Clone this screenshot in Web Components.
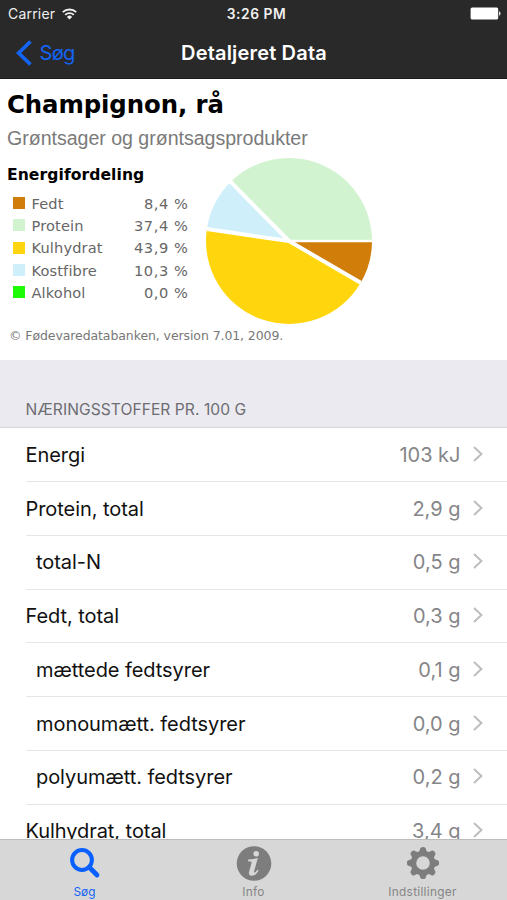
<!DOCTYPE html>
<html lang="da">
<head>
<meta charset="utf-8">
<title>Detaljeret Data</title>
<style>
html,body{margin:0;height:100%;overflow:hidden;background:#fff}
</style>
</head>
<body>
<food-app></food-app>
<script>
const define = (name, html, after) => {
  const t = document.createElement('template');
  t.innerHTML = html;
  customElements.define(name, class extends HTMLElement {
    connectedCallback() {
      if (this.shadowRoot) return;
      const r = this.attachShadow({mode: 'open'});
      r.append(t.content.cloneNode(true));
      if (after) after(this, r);
    }
  });
};

define('status-bar', `
<style>
:host{display:grid;grid-template-columns:1fr auto 1fr;align-items:center;height:27px;padding:0 6px 0 8px;box-sizing:border-box;color:#f0f0f0;font-size:14px}
.left{display:flex;align-items:center;gap:7px}
.left span{letter-spacing:.2px}
.time{font-weight:600;font-size:13.8px;letter-spacing:.55px;padding-left:4px}
.battery{justify-self:end}
svg{display:block}
</style>
<div class="left"><span>Carrier</span>
<svg width="15" height="12" viewBox="0 0 15 12"><g fill="none" stroke="#f0f0f0" stroke-width="1.9"><path d="M.8 4.2a9.5 9.5 0 0 1 13.4 0"/><path d="M3.2 6.9a6.1 6.1 0 0 1 8.6 0"/></g><path d="M7.5 11.6 4.9 8.9a3.7 3.7 0 0 1 5.2 0z" fill="#f0f0f0"/></svg></div>
<span class="time">3:26 PM</span>
<svg class="battery" width="31" height="13" viewBox="0 0 31 13"><rect x=".6" y=".5" width="27.6" height="12" rx="1.6" fill="#fff"/><path d="M29 4.3q1.6.5 1.6 2.2T29 8.7z" fill="#ddd"/></svg>`);

define('nav-bar', `
<style>
:host{display:grid;grid-template-columns:1fr auto 1fr;align-items:center;height:52px;padding:0 16px;box-sizing:border-box;border-bottom:1px solid #1c1c1c}
.back{display:flex;align-items:center;gap:6.5px;color:#1464f4;font-size:20.2px;letter-spacing:-.8px}
h1{margin:0;font-size:20px;font-weight:600;letter-spacing:.17px;color:#fff;padding-left:1px}
svg{display:block}
</style>
<div class="back"><svg width="17" height="26" viewBox="0 0 17 26"><path d="M14.5 1.5 2.6 13l11.9 11.5" fill="none" stroke="#1464f4" stroke-width="3.7"/></svg><span>Søg</span></div>
<h1><slot></slot></h1>`);

define('legend-row', `
<style>
:host{display:grid;grid-template-columns:12px 1fr auto;column-gap:6.5px;align-items:center;height:22.3px;font:14.6px "DejaVu Sans",sans-serif;color:#666}
i{width:12px;height:12px;background:var(--c)}
.n{letter-spacing:.13px}.v{letter-spacing:.6px;margin-right:-.6px}
</style><i></i><span class="n"><slot></slot></span><span class="v"></span>`,
(h, r) => { h.style.setProperty('--c', h.getAttribute('color')); r.querySelector('.v').textContent = h.getAttribute('value'); });

define('pie-chart', `
<style>:host{display:block;width:168px;height:168px}svg{display:block}</style>
<svg width="168" height="168" viewBox="-84 -84 168 168"></svg>`,
(h, r) => {
  const parts = [[8.4,'#d17d0a'],[43.9,'#ffd60d'],[10.3,'#cff0fb'],[37.4,'#d1f3cf']];
  const svg = r.querySelector('svg');
  const p = a => (83 * Math.cos(a)).toFixed(2) + ' ' + (83 * Math.sin(a)).toFixed(2);
  let a = 0, slices = '', gaps = '';
  for (const [v, c] of parts) {
    const b = a + v / 100 * 2 * Math.PI;
    slices += `<path d="M0 0L${p(a)}A83 83 0 0 1 ${p(b)}Z" fill="${c}"/>`;
    gaps += `<path d="M0 0L${p(a)}" stroke="#fff" stroke-width="${a ? 4 : 2.5}"/>`;
    a = b;
  }
  svg.innerHTML = slices + gaps;
});

define('food-summary', `
<style>
:host{display:block;height:281px;box-sizing:border-box;padding:10px 8px 0 7px;background:#fff}
h2{margin:0;font:bold 24.4px/32px "DejaVu Sans",sans-serif;letter-spacing:-.1px;color:#000}
p{margin:4px 0 0;font:19.6px/26px "Liberation Sans",sans-serif;color:#7a7a7a;letter-spacing:-.03px}
.body{display:grid;grid-template-columns:181px 168px;column-gap:16.5px;height:168px}
h3{margin:12px 0 5px;font:bold 15.6px/24px "DejaVu Sans",sans-serif;color:#000;letter-spacing:.06px}
.legend{padding-left:6px}
pie-chart{margin-top:6px}
small{display:block;margin:9px 0 0 2px;font:12.5px/16px "DejaVu Sans",sans-serif;letter-spacing:-.09px;color:#777}
</style>
<h2>Champignon, rå</h2>
<p>Grøntsager og grøntsagsprodukter</p>
<div class="body"><div><h3>Energifordeling</h3><div class="legend">
<legend-row color="#d17d0a" value="8,4 %">Fedt</legend-row>
<legend-row color="#d1f3cf" value="37,4 %">Protein</legend-row>
<legend-row color="#ffd60d" value="43,9 %">Kulhydrat</legend-row>
<legend-row color="#cff0fb" value="10,3 %">Kostfibre</legend-row>
<legend-row color="#1dfb05" value="0,0 %">Alkohol</legend-row>
</div></div><pie-chart></pie-chart></div>
<small>© Fødevaredatabanken, version 7.01, 2009.</small>`);

define('section-header', `
<style>
:host{display:flex;align-items:flex-end;height:68.4px;box-sizing:border-box;padding:0 25.5px 8px;background:#ebeaf0;border-bottom:1px solid #d6d5da;color:#6d6d72;font-size:15.6px;line-height:18px;letter-spacing:.05px}
</style><slot></slot>`);

define('nutrient-row', `
<style>
:host{display:flex;align-items:center;height:53.75px;box-sizing:border-box;margin-left:26px;padding-right:24.5px;border-bottom:1px solid #e6e6e8;font-size:20px;color:#111}
:host([sub]){--indent:10.5px}
.name{flex:1;padding-left:var(--indent,0);margin-left:-.5px;letter-spacing:-.06px}
.value{color:#858588;margin-right:12px;letter-spacing:0}
svg{display:block;margin-top:-2px}
</style>
<span class="name"><slot></slot></span><span class="value"></span>
<svg width="10" height="16" viewBox="0 0 10 16"><path d="m1 1 7.4 7L1 15" fill="none" stroke="#bdbdc1" stroke-width="2"/></svg>`,
(h, r) => { r.querySelector('.value').textContent = h.getAttribute('value'); });

define('tab-item', `
<style>
:host{display:flex;flex-direction:column;align-items:center;color:#858585;font-size:11.8px;line-height:14px;letter-spacing:.3px}
:host([active]){color:#1464f4;letter-spacing:0}
.icon{height:36px;margin-top:6px;display:flex;align-items:flex-start}
span{display:block;margin-top:2.5px}
</style><div class="icon"><slot name="icon"></slot></div><span><slot></slot></span>`);

define('gear-icon', `<style>:host,svg{display:block}</style><svg width="34" height="34" viewBox="-17 -17 34 34"></svg>`,
(h, r) => {
  let teeth = '';
  for (let i = 0; i < 8; i++) teeth += `<path transform="rotate(${i * 45})" d="M-5-10.5Q-3-12-2.8-14.6Q-2.6-16.1 0-16.1T2.8-14.6Q3-12 5-10.5Z"/>`;
  r.querySelector('svg').innerHTML = `<g fill="#7d7d7d">${teeth}<path fill-rule="evenodd" d="M0-12.2a12.2 12.2 0 1 0 0 24.4a12.2 12.2 0 1 0 0-24.4M0-6.8a6.8 6.8 0 1 1 0 13.6a6.8 6.8 0 1 1 0-13.6"/></g>`;
});

define('tab-bar', `
<style>
:host{display:grid;grid-template-columns:repeat(3,1fr);height:61px;box-sizing:border-box;border-top:1px solid #bcbcbc;background:#d7d7d7}
svg{display:block}
</style>
<tab-item active><svg slot="icon" width="34" height="34" viewBox="0 0 34 34"><g fill="none" stroke="#0a60ff"><circle cx="14" cy="14" r="9.9" stroke-width="4"/><path d="m21.3 21.3 7.7 7.7" stroke-width="4.8" stroke-linecap="round"/></g></svg>Søg</tab-item>
<tab-item><svg slot="icon" width="36" height="36" viewBox="0 0 36 36"><circle cx="18" cy="17.5" r="17.3" fill="#7d7d7d"/><circle cx="20.2" cy="7.8" r="2.8" fill="#d7d7d7"/><path d="M12.2 13.6q4.6-.2 9.6-1.6l-3.6 13q-.4 1.6.4 1.6 1 0 2.8-2.8l1.2.8q-2.8 5.2-6.6 5.2-3.9 0-2.9-4l2.3-8.3q.5-1.8-.8-2l-2.6-.3z" fill="#d7d7d7"/></svg>Info</tab-item>
<tab-item><gear-icon slot="icon"></gear-icon>Indstillinger</tab-item>`);

define('food-app', `
<style>
:host{display:grid;grid-template-rows:79px minmax(0,1fr) 61px;width:507px;height:900px;overflow:hidden;font-family:Inter,"Liberation Sans",sans-serif}
header{background:#292929}
main{overflow:hidden;background:#fff}
</style>
<header><status-bar></status-bar><nav-bar>Detaljeret Data</nav-bar></header>
<main><food-summary></food-summary>
<section-header>NÆRINGSSTOFFER PR. 100 G</section-header>
<nutrient-row value="103 kJ">Energi</nutrient-row>
<nutrient-row value="2,9 g">Protein, total</nutrient-row>
<nutrient-row sub value="0,5 g">total-N</nutrient-row>
<nutrient-row value="0,3 g">Fedt, total</nutrient-row>
<nutrient-row sub value="0,1 g">mættede fedtsyrer</nutrient-row>
<nutrient-row sub value="0,0 g">monoumætt. fedtsyrer</nutrient-row>
<nutrient-row sub value="0,2 g">polyumætt. fedtsyrer</nutrient-row>
<nutrient-row value="3,4 g">Kulhydrat, total</nutrient-row>
</main>
<tab-bar></tab-bar>`);
</script>
</body>
</html>
